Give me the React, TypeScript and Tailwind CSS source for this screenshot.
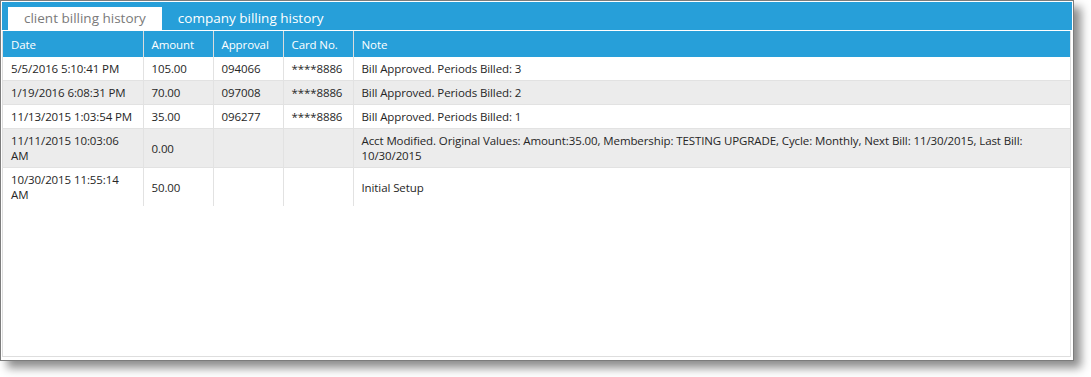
import React from 'react';

type Row = {
  date: string;
  amount: string;
  approval: string;
  card: string;
  note: string;
};

const rows: Row[] = [
  { date: '5/5/2016 5:10:41 PM', amount: '105.00', approval: '094066', card: '****8886', note: 'Bill Approved. Periods Billed: 3' },
  { date: '1/19/2016 6:08:31 PM', amount: '70.00', approval: '097008', card: '****8886', note: 'Bill Approved. Periods Billed: 2' },
  { date: '11/13/2015 1:03:54 PM', amount: '35.00', approval: '096277', card: '****8886', note: 'Bill Approved. Periods Billed: 1' },
  {
    date: '11/11/2015 10:03:06 AM',
    amount: '0.00',
    approval: '',
    card: '',
    note: 'Acct Modified. Original Values: Amount:35.00, Membership: TESTING UPGRADE, Cycle: Monthly, Next Bill: 11/30/2015, Last Bill: 10/30/2015',
  },
  { date: '10/30/2015 11:55:14 AM', amount: '50.00', approval: '', card: '', note: 'Initial Setup' },
];

const headers = ['Date', 'Amount', 'Approval', 'Card No.', 'Note'];

export default function App() {
  return (
    <div className="w-[1091px] h-[377px] bg-white" style={{ fontFamily: '"Open Sans", "Noto Sans", sans-serif' }}>
      <div className="w-[1074px] h-[361px] border border-[#7c7c7c] bg-white p-px flex flex-col shadow-[7px_7px_9px_rgba(0,0,0,0.45)]">
        {/* Tabs */}
        <div className="h-[28px] shrink-0 bg-[#279fd9] flex items-end pl-[6px]">
          <div className="h-[23px] px-4 bg-white text-[13.5px] leading-[23px] text-[#7a7a7a]">client billing history</div>
          <div className="h-[23px] px-4 text-[13.5px] leading-[23px] text-white">company billing history</div>
        </div>

        {/* Grid */}
        <div className="flex-1 mt-px mr-px mb-[2px] border-x border-b border-[#dedede]">
          <table className="w-full table-fixed border-collapse text-[11.5px] leading-[15px] tracking-[-0.1px]">
            <colgroup>
              <col className="w-[140px]" />
              <col className="w-[70px]" />
              <col className="w-[70px]" />
              <col className="w-[70px]" />
              <col />
            </colgroup>
            <thead>
              <tr className="h-[26px] bg-[#279fd9] text-white">
                {headers.map((h, i) => (
                  <th
                    key={h}
                    className={`text-left font-normal px-2 py-0 ${i > 0 ? 'border-l border-[#dcdcdc]' : ''}`}
                  >
                    {h}
                  </th>
                ))}
              </tr>
            </thead>
            <tbody className="text-[#262626]">
              {rows.map((r, idx) => (
                <tr
                  key={idx}
                  className={`${idx % 2 === 1 ? 'bg-[#ececec]' : 'bg-white'} ${idx < rows.length - 1 ? 'border-b border-[#e2e2e2]' : ''}`}
                >
                  <td className="px-2 py-[4px] align-middle">{r.date}</td>
                  <td className="px-2 py-[4px] align-middle border-l border-[#e2e2e2]">{r.amount}</td>
                  <td className="px-2 py-[4px] align-middle border-l border-[#e2e2e2]">{r.approval}</td>
                  <td className="px-2 py-[4px] align-middle border-l border-[#e2e2e2]">{r.card}</td>
                  <td className="px-2 py-[4px] align-middle border-l border-[#e2e2e2]">{r.note}</td>
                </tr>
              ))}
            </tbody>
          </table>
        </div>
      </div>
    </div>
  );
}
